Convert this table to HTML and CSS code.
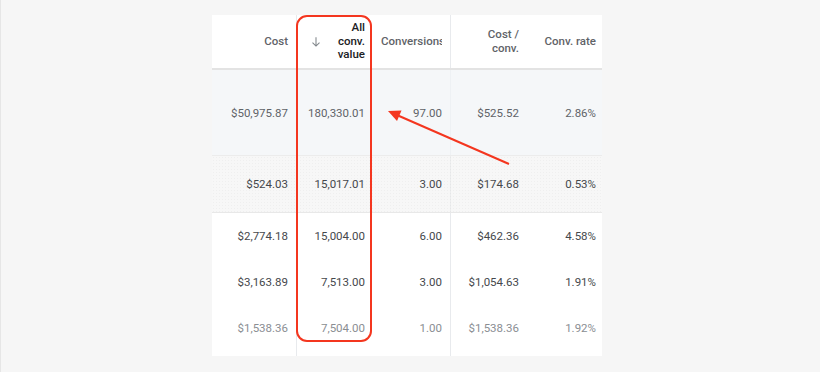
FILE: index.html
```html
<!DOCTYPE html>
<html>
<head>
<meta charset="utf-8">
<link rel="stylesheet" href="styles.css">
</head>
<body>
<div class="page">
  <div class="card">
    <div class="grid">
      <div class="row head">
        <div class="cell"><div class="txt">Cost</div></div>
        <div class="cell sorted">
          <svg class="sort" width="14" height="14" viewBox="0 0 24 24"><path d="M12 4v15M6 13l6 6 6-6" fill="none" stroke="#80868b" stroke-width="1.8"/></svg>
          <div class="txt">All<br>conv.<br>value</div>
        </div>
        <div class="cell"><div class="txt clip">Conversions</div></div>
        <div class="cell"><div class="txt">Cost /<br>conv.</div></div>
        <div class="cell"><div class="txt">Conv. rate</div></div>
      </div>
      <div class="row r1">
        <div class="cell">$50,975.87</div>
        <div class="cell">180,330.01</div>
        <div class="cell">97.00</div>
        <div class="cell">$525.52</div>
        <div class="cell">2.86%</div>
      </div>
      <div class="row r2">
        <div class="cell">$524.03</div>
        <div class="cell">15,017.01</div>
        <div class="cell">3.00</div>
        <div class="cell">$174.68</div>
        <div class="cell">0.53%</div>
      </div>
      <div class="row rn">
        <div class="cell">$2,774.18</div>
        <div class="cell">15,004.00</div>
        <div class="cell">6.00</div>
        <div class="cell">$462.36</div>
        <div class="cell">4.58%</div>
      </div>
      <div class="row rn">
        <div class="cell">$3,163.89</div>
        <div class="cell">7,513.00</div>
        <div class="cell">3.00</div>
        <div class="cell">$1,054.63</div>
        <div class="cell">1.91%</div>
      </div>
      <div class="row rn fade">
        <div class="cell">$1,538.36</div>
        <div class="cell">7,504.00</div>
        <div class="cell">1.00</div>
        <div class="cell">$1,538.36</div>
        <div class="cell">1.92%</div>
      </div>
    </div>
    <svg class="overlay" width="390" height="341" viewBox="0 0 390 341">
      <rect x="85" y="1" width="74" height="325" rx="10" ry="10" fill="none" stroke="#f4361f" stroke-width="2"/>
      <line x1="297" y1="149" x2="186" y2="100.5" stroke="#f4361f" stroke-width="2"/>
      <polygon points="176,96 189.5,95.5 185,106" fill="#f4361f"/>
    </svg>
  </div>
</div>
</body>
</html>
```

FILE: styles.css
```css
html, body {
  margin: 0;
  padding: 0;
}
body {
  background: #f6f6f6;
  font-family: Roboto, "Liberation Sans", sans-serif;
  width: 820px;
  height: 372px;
  overflow: hidden;
  border-left: 1px solid #e6e6e6;
  box-sizing: border-box;
}
.page {
  padding: 15px 0 0 211px;
}
.card {
  position: relative;
  width: 390px;
  height: 341px;
  background: #fff;
}
.grid {
  display: flex;
  flex-direction: column;
  background:
    linear-gradient(#e8eaed, #e8eaed) 84px 0 / 1px 100% no-repeat,
    linear-gradient(#e8eaed, #e8eaed) 238px 0 / 1px 100% no-repeat;
  height: 341px;
}
.row {
  display: grid;
  grid-template-columns: 84px 77px 77px 77px 75px;
  font-size: 11.5px;
  color: #45484c;
}
.cell {
  display: flex;
  align-items: center;
  justify-content: flex-end;
  padding: 0 8px 0 8px;
  min-width: 0;
}
.cell:last-child {
  padding-right: 6px;
}
.head {
  height: 53px;
  border-bottom: 2px solid #e3e3e3;
}
.head .cell {
  font-weight: 500;
  color: #5f6368;
  line-height: 13.5px;
}
.head .txt {
  text-align: right;
}
.head .clip {
  overflow: hidden;
  white-space: nowrap;
  text-align: left;
  width: 100%;
}
.head .sorted {
  justify-content: space-between;
  color: #202124;
  padding-left: 13px;
}
.sort {
  display: block;
}
.r1 {
  height: 85px;
  border-bottom: 1px solid #ececec;
  background-color: rgba(241, 243, 246, 0.7);
  color: #5f6368;
}
.r2 {
  height: 56px;
  border-bottom: 1px solid #e8e8e8;
  background-color: rgba(240, 240, 240, 0.5);
  background-image: radial-gradient(rgba(0,0,0,0.03) 0.6px, transparent 0.8px);
  background-size: 3px 3px;
}
.rn {
  height: 46px;
}
.fade {
  color: #8a8e93;
}
.overlay {
  position: absolute;
  left: 0;
  top: 0;
  pointer-events: none;
}
```
